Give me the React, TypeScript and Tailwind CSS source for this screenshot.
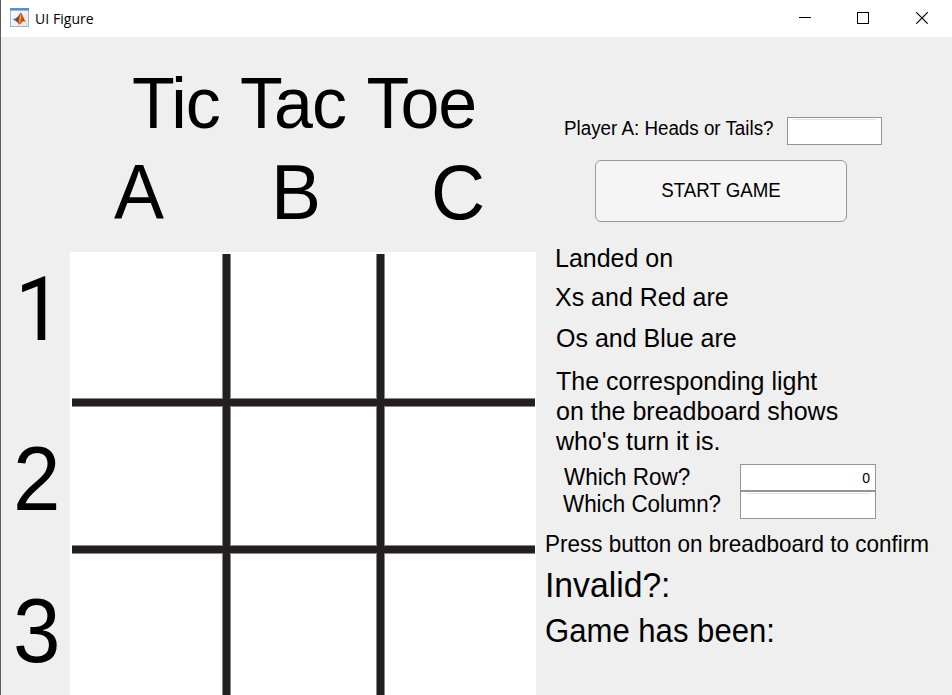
import type { ReactNode } from "react";

function Line({ className, children }: { className: string; children: ReactNode }) {
  return (
    <div className={`origin-[0_84.65%] scale-y-[1.04] whitespace-nowrap leading-none ${className}`}>
      {children}
    </div>
  );
}

function MatlabIcon() {
  return (
    <svg width="20" height="20" viewBox="0 0 20 20">
      <defs>
        <linearGradient id="flame" x1="0" x2="1">
          <stop offset="0" stopColor="#7a1c10" />
          <stop offset="0.4" stopColor="#e8641b" />
          <stop offset="1" stopColor="#a3260f" />
        </linearGradient>
        <linearGradient id="pane" x1="0" y1="0" x2="1" y2="1">
          <stop offset="0" stopColor="#ffffff" />
          <stop offset="1" stopColor="#dfe5ea" />
        </linearGradient>
      </defs>
      <rect x="0.5" y="0.5" width="18" height="18" fill="url(#pane)" stroke="#a9b4bd" />
      <rect x="0" y="0" width="19" height="2.6" fill="#5f8fc0" />
      <path d="M2.5 11.6 L6.5 9.8 L8.3 10.8 L6 13.2 Z" fill="#3f86c6" />
      <path d="M6.5 9.8 C8.5 9 9.3 5.5 11 4.6 L9.5 11 L6 13.2 Z" fill="#27558e" />
      <path d="M6 13.2 C8 12 9.4 6 11 4.6 C12.6 6.2 13.8 11.5 16 14.2 C14.2 12.8 12.8 13 11.4 15 C10.4 16.4 9.4 16.6 8.8 16.6 C8.2 15 7.5 13.4 6 13.2 Z" fill="url(#flame)" />
      <path d="M10.8 5.2 L11.4 9 L9.4 15.6 L8.8 14 Z" fill="#f6a63a" />
    </svg>
  );
}

function TitleBar() {
  return (
    <header className="flex h-[37px] shrink-0 items-start bg-white">
      <div className="ml-[9px] mt-2">
        <MatlabIcon />
      </div>
      <div className="ml-[5px] mt-[9px] font-['Open_Sans','Noto_Sans',sans-serif] text-[14px] leading-5 tracking-[0.05px]">UI Figure</div>
      <svg className="ml-auto mr-[21px] mt-3" width="132" height="12" viewBox="0 0 132 12" shapeRendering="crispEdges">
        <rect x="0" y="5" width="12" height="1" />
        <rect x="58.5" y="0.5" width="11" height="11" fill="none" stroke="#000" />
        <path d="M117.3 0.3 L128.7 11.7 M128.7 0.3 L117.3 11.7" stroke="#000" strokeWidth="1.1" shapeRendering="auto" />
      </svg>
    </header>
  );
}

const cells = [
  "border-r border-b",
  "border-x border-b",
  "border-l border-b",
  "border-r border-y",
  "border-x border-y",
  "border-l border-y",
  "border-r border-t",
  "border-x border-t",
  "border-l border-t",
];

function Board() {
  return (
    <div className="h-[443px] w-[466px] bg-white pl-[2px] pr-px pt-[2px]">
      <div className="grid h-[441px] grid-cols-[151px_147px_151px] grid-rows-[145px_140px_142px] gap-[7px] bg-[#231f20]">
        {cells.map((c, i) => (
          <div key={i} className={`border-[#8a8889] bg-white ${c}`} />
        ))}
      </div>
    </div>
  );
}

function Field({ className, children }: { className: string; children?: ReactNode }) {
  return (
    <div className={`border border-[#949494] bg-white px-[5px] ${className}`}>
      {children ?? <div className="mt-px h-px bg-[#e3e3e3]" />}
    </div>
  );
}

export default function App() {
  return (
    <div className="flex h-[695px] w-[952px] flex-col overflow-hidden border-l border-[#5c5c5c] bg-[#efefef] font-['Liberation_Sans',Arial,sans-serif] text-black">
      <TitleBar />
      <main className="flex flex-1">
        <section className="w-[535px] shrink-0">
          <Line className="ml-[131px] mt-[32px] h-[71px] text-[70px] tracking-[-1px] [word-spacing:3.2px]">Tic Tac Toe</Line>
          <div className="mt-4 flex h-[75px] pl-[113px] text-[75px]">
            <Line className="w-[157px]">A</Line>
            <Line className="w-[160px]">B</Line>
            <Line className="">C</Line>
          </div>
          <div className="mt-[21px] flex">
            <div className="w-[69px] text-[88px]">
              <Line className="ml-[14px] mt-[17px] font-['Roboto',sans-serif] text-[85px]">1</Line>
              <Line className="ml-3 mt-[82px] scale-x-[0.97]">2</Line>
              <Line className="ml-3 mt-[64px] scale-x-[0.97]">3</Line>
            </div>
            <Board />
          </div>
        </section>
        <section className="flex-1 pt-20">
          <div className="flex h-7">
            <Line className="ml-[28px] mt-[3px] w-[223px] text-[18.8px]">Player A: Heads or Tails?</Line>
            <Field className="h-7 w-[95px]" />
          </div>
          <button className="ml-[59px] mt-[15px] flex h-[62px] w-[252px] items-center justify-center rounded-[6px] border border-[#999] bg-[#f5f5f5]">
            <Line className="text-[18.7px]">START GAME</Line>
          </button>
          <div className="pl-[19px] text-[25px]">
            <Line className="mt-6">Landed on</Line>
            <Line className="mt-[14px]">Xs and Red are</Line>
            <Line className="ml-px mt-4">Os and Blue are</Line>
            <div className="ml-px mt-[15px]">
              <Line className="mb-[5px] mt-[18px]">The corresponding light</Line>
              <Line className="mb-[5px]">on the breadboard shows</Line>
              <Line className="">who's turn it is.</Line>
            </div>
          </div>
          <div className="mt-[10px] flex h-[27px]">
            <Line className="ml-[28px] mt-[3px] w-[176px] text-[22.5px]">Which Row?</Line>
            <Field className="flex h-[27px] w-[136px] justify-end">
              <Line className="mt-[6px] text-[14px]">0</Line>
            </Field>
          </div>
          <div className="flex h-7">
            <Line className="ml-[27px] mt-[3px] w-[177px] text-[22.4px]">Which Column?</Line>
            <Field className="h-7 w-[136px]" />
          </div>
          <Line className="ml-[9px] mt-[15px] h-[22px] text-[22.5px]">Press button on breadboard to confirm</Line>
          <Line className="ml-[9px] mt-[13px] h-[34px] text-[33.7px]">Invalid?:</Line>
          <Line className="ml-[9px] mt-[13px] text-[31.1px]">Game has been:</Line>
        </section>
      </main>
    </div>
  );
}
